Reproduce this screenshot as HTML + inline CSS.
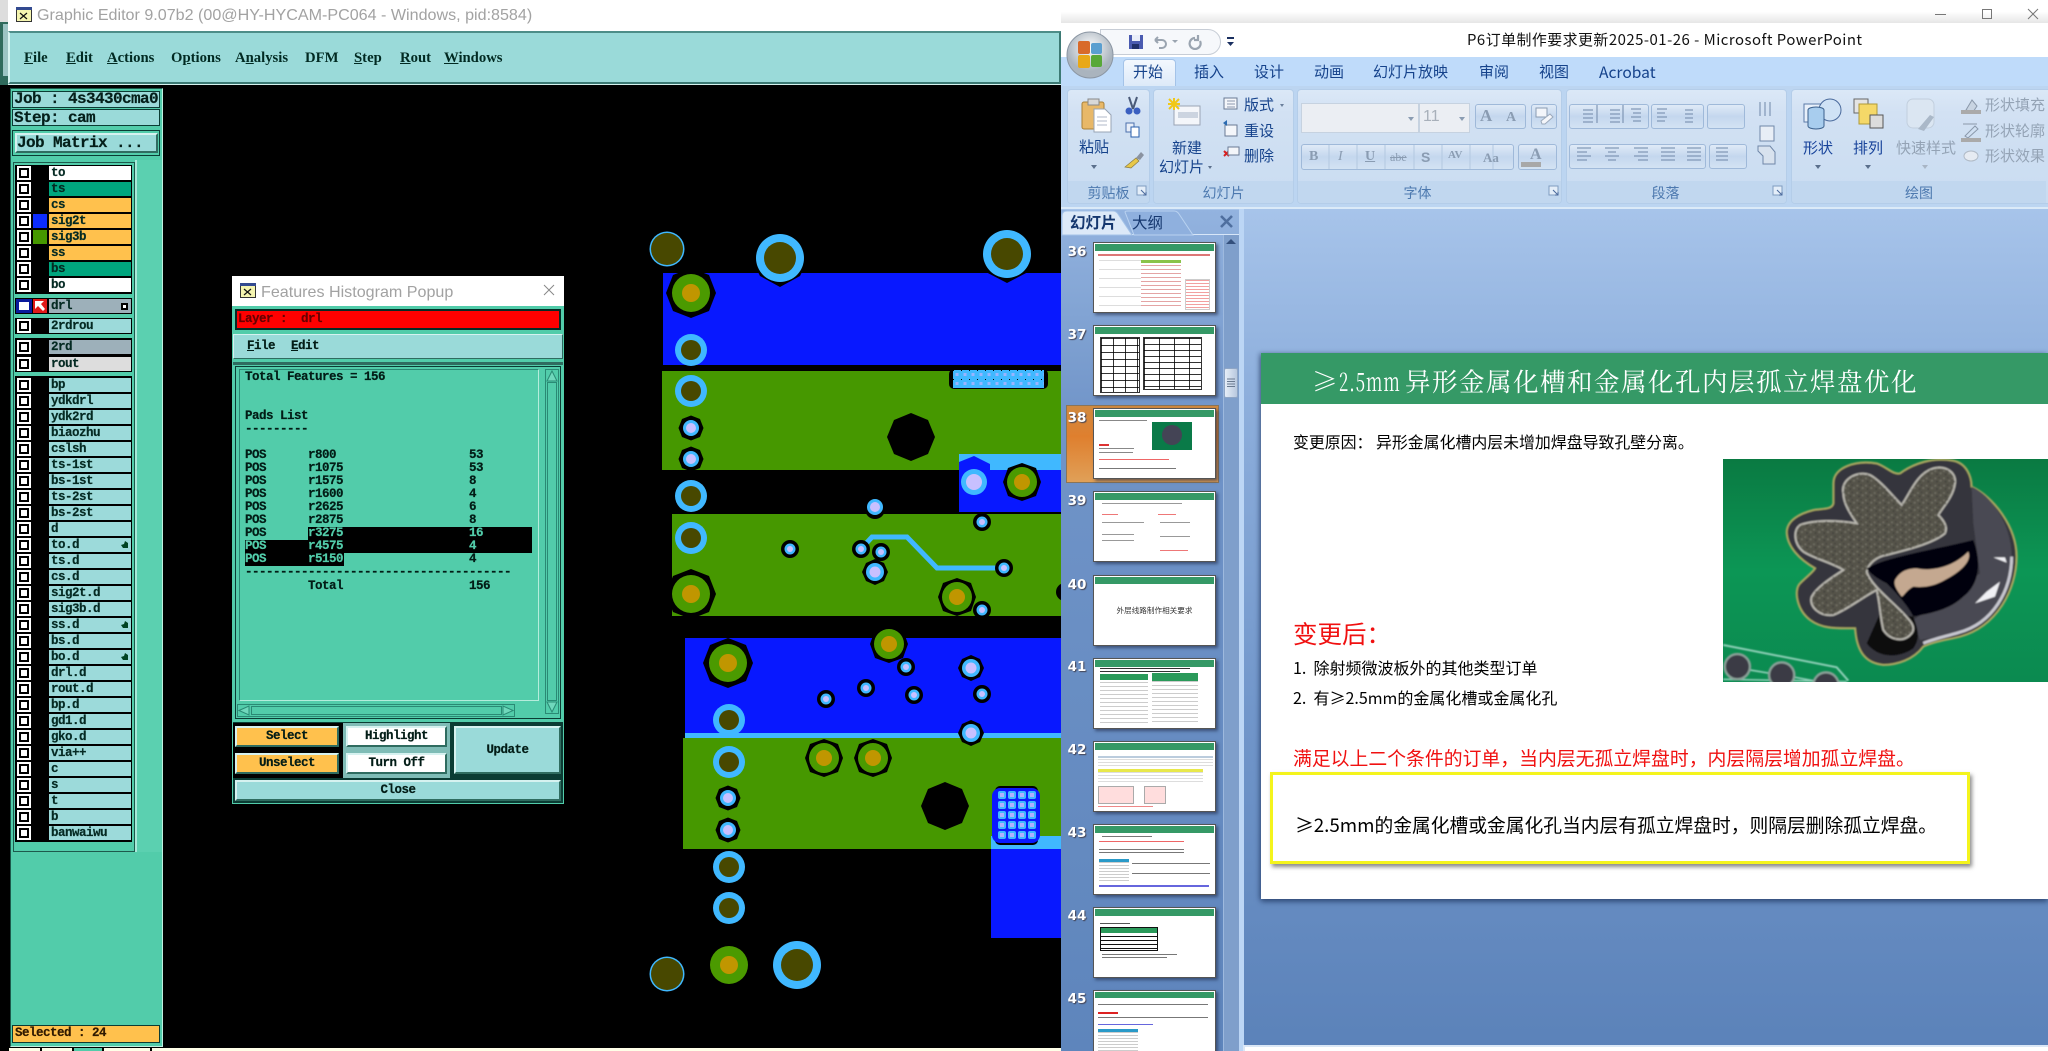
<!DOCTYPE html>
<html><head><meta charset="utf-8"><title>Screenshot</title>
<style>
html,body{margin:0;padding:0;width:2048px;height:1051px;overflow:hidden;background:#000}
div,b,i,span,pre{position:absolute;display:block;margin:0;font-style:normal}
u{position:static}
.t{white-space:nowrap;line-height:20px;height:20px}
.m{font-family:"Liberation Mono",monospace;font-weight:bold;font-size:12.5px;letter-spacing:-.5px;color:#021c16;white-space:pre;-webkit-text-stroke:.2px}
.b15{font-size:16px;letter-spacing:-.6px;color:#041f1a}
.r{left:15px;width:117px;height:16px;background:#000}
.c{left:2px;top:1px;width:14px;height:14px;background:#fff;box-shadow:inset 0 0 0 2px #fff,inset 0 0 0 4px #000}
.l{left:34px;top:1px;width:82px;height:14px;line-height:14px;padding-left:2px;box-sizing:border-box;background:#9cdada;font-family:"Liberation Mono",monospace;font-weight:bold;font-size:12.5px;letter-spacing:-.5px;color:#052a23;white-space:pre;-webkit-text-stroke:.2px}
.mb{font-family:"Liberation Serif",serif;font-weight:bold;font-size:14.7px;color:#012a22;top:48px}
.btn{box-sizing:border-box;border:2px solid;border-color:#d6f2f0 #2f6c60 #2f6c60 #d6f2f0;text-align:center;font-family:"Liberation Mono",monospace;font-weight:bold;font-size:12.5px;letter-spacing:-.5px;color:#021c16;-webkit-text-stroke:.2px}
.p{font-family:"Noto Sans CJK SC","Liberation Sans",sans-serif;color:#15428b;font-size:15px}
.g{top:89px;height:115px;box-sizing:border-box;border:1px solid #b4cde9;border-radius:4px;background:linear-gradient(#dbe8f7 0,#d2e1f3 20%,#c9dcf1 100%);overflow:hidden}
.g b{left:0;right:0;bottom:0;height:22px;box-sizing:border-box;background:#c1d7ef;text-align:center;font:14px/25px "Noto Sans CJK SC",sans-serif;color:#4d79af}
.bg{box-sizing:border-box;border:1px solid #9fb9d9;border-radius:3px;background:linear-gradient(#dfeaf7,#c4d7ee 50%,#d3e2f3)}
.th{left:1093px;width:123px;height:71px;background:#fff;border:1px solid #555;box-sizing:border-box;box-shadow:2px 2px 3px rgba(30,40,70,.6);overflow:hidden}
.th>i{left:1px;top:1px;right:1px;height:7px;background:#359966}
.n{left:1066px;width:22px;text-align:center;font:bold 13.5px/14px "DejaVu Sans",sans-serif;color:#fff;text-shadow:1px 1px 1px #445}
.th s{position:absolute;display:block;text-decoration:none}
.s{font-family:"Noto Sans CJK SC","Liberation Sans",sans-serif;color:#000;white-space:nowrap;line-height:28px;height:28px}
.in{position:static;display:inline;color:#52ccaa}
.ar{border:3px solid transparent;border-top:4px solid #8a9cb2;border-bottom:0}
</style></head><body>

<!-- far-left background window sliver -->
<div style="left:0;top:0;width:10px;height:1051px;background:#2f6a5c"></div>
<div style="left:0;top:0;width:8px;height:22px;background:#ddd"></div>
<div style="left:3px;top:24px;width:5px;height:52px;background:#9cc4c4"></div>
<div style="left:3px;top:845px;width:5px;height:180px;background:#52ccaa"></div>
<div style="left:3px;top:1025px;width:5px;height:18px;background:#ffc14d"></div>

<!-- main window title -->
<div style="left:8px;top:0;width:1053px;height:31px;background:#fff"></div>
<svg style="position:absolute;left:16px;top:7px" width="17" height="16"><rect x=".5" y=".5" width="15" height="14" fill="#f5f5b0" stroke="#333"/><rect x="0" y="0" width="16" height="3" fill="#334a90"/><path d="M4 6l7 6M11 6l-7 6" stroke="#111" stroke-width="1.2"/></svg>
<div class="t" style="left:37px;top:5px;font:16.1px/20px 'Liberation Sans',sans-serif;color:#a2a2a2">Graphic Editor 9.07b2 (00@HY-HYCAM-PC064 - Windows, pid:8584)</div>

<!-- menu bar -->
<div style="left:8px;top:31px;width:1053px;height:53px;box-sizing:border-box;background:#9adad9;border:2px solid;border-color:#4d8d88 #3c7a74 #3c7a74 #d8f4f2"></div>
<div style="left:8px;top:84px;width:1053px;height:2px;background:#d5f2ef"></div>
<div class="t mb" style="left:24px"><u>F</u>ile</div>
<div class="t mb" style="left:66px"><u>E</u>dit</div>
<div class="t mb" style="left:107px"><u>A</u>ctions</div>
<div class="t mb" style="left:171px">O<u>p</u>tions</div>
<div class="t mb" style="left:235px">A<u>n</u>alysis</div>
<div class="t mb" style="left:305px">DFM</div>
<div class="t mb" style="left:354px"><u>S</u>tep</div>
<div class="t mb" style="left:400px"><u>R</u>out</div>
<div class="t mb" style="left:444px"><u>W</u>indows</div>

<!-- PCB canvas -->
<svg style="position:absolute;left:0;top:0" width="1061" height="1051">
<defs>
<g id="r"><circle r="16" fill="#40b8ff"/><circle r="10" fill="#484800"/></g>
<g id="R"><circle r="24" fill="#40b8ff"/><circle r="16" fill="#484800"/></g>
<g id="T"><circle r="17.5" fill="#40b8ff"/><circle r="16" fill="#484800"/></g>
<g id="G"><polygon points="0,-25 18,-18 25,0 18,18 0,25 -18,18 -25,0 -18,-18"/><circle r="19" fill="#4b9a00"/><circle r="9" fill="#c09600"/></g>
<g id="M"><polygon points="0,-19 14,-14 19,0 14,14 0,19 -14,14 -19,0 -14,-14"/><circle r="15" fill="#4b9a00"/><circle r="8" fill="#c09600"/></g>
<g id="L"><polygon points="0,-12.500 9,-9 12.500,0 9,9 0,12.500 -9,9 -12.500,0 -9,-9"/><circle r="8" fill="#40b8ff"/><circle r="5" fill="#c8c0ff"/></g>
<g id="B"><polygon points="0,-13 9,-9 13,0 9,9 0,13 -9,9 -13,0 -9,-9"/><circle r="9" fill="#40b8ff"/><circle r="5.500" fill="#c8c0ff"/></g>
<g id="S"><circle r="9" fill="#000"/><circle r="5.500" fill="#40b8ff"/><circle r="3" fill="#c8c0ff"/></g>
<pattern id="pa" x="953" y="370" width="8" height="9" patternUnits="userSpaceOnUse"><rect width="8" height="9" fill="#40b8ff"/><rect x="2.500" y="3" width="3" height="3" fill="#9ab4ff"/><rect width="1" height="1" fill="#000"/></pattern>
<pattern id="pb" x="997" y="790" width="10" height="10" patternUnits="userSpaceOnUse"><rect width="10" height="10" fill="#0a18ff"/><rect x="1" y="1" width="8" height="8" rx="2" fill="#40b8ff"/><rect x="3" y="3" width="4" height="4" fill="#b0b0ff"/></pattern>
</defs>
<rect x="0" y="85" width="1061" height="963" fill="#000"/>
<rect x="663" y="273" width="398" height="92" fill="#0818ff"/>
<rect x="662" y="371" width="399" height="99" fill="#469800"/>
<rect x="672" y="514" width="389" height="102" fill="#469800"/>
<rect x="959" y="454" width="102" height="16" fill="#40b8ff"/>
<rect x="959" y="470" width="102" height="42" fill="#0818ff"/>
<polygon points="959,470 959,462 974,456 990,464 990,470" fill="#0818ff"/>
<rect x="685" y="638" width="376" height="95" fill="#0818ff"/>
<rect x="685" y="733" width="376" height="5" fill="#40b8ff"/>
<rect x="683" y="738" width="378" height="111" fill="#469800"/>
<rect x="991" y="849" width="70" height="89" fill="#0818ff"/>
<rect x="991" y="836" width="70" height="13" fill="#40b8ff"/>
<rect x="949" y="369" width="99" height="20" rx="5" fill="#000"/>
<rect x="953" y="370" width="91" height="18" fill="url(#pa)"/>
<polygon points="911,413 928,420 935,437 928,454 911,461 894,454 887,437 894,420"/>
<polygon points="945,782 962,789 969,806 962,823 945,830 928,823 921,806 928,789"/>
<rect x="995" y="786" width="43" height="59" rx="5" fill="#000"/>
<rect x="992" y="788" width="48" height="55" rx="8" fill="#0a18ff"/>
<rect x="997" y="790" width="40" height="50" fill="url(#pb)"/>
<polygon points="780,287 800,276 809,258 800,235 760,235 751,258 760,276"/>
<polygon points="1007,283 1030,271 1036,254 1030,235 984,235 978,254 984,271"/>
<polyline points="861,549 872,537 907,537 937,568 1004,568" fill="none" stroke="#40b8ff" stroke-width="5"/>
<use href="#T" x="667" y="249"/><use href="#R" x="780" y="258"/><use href="#R" x="1007" y="254"/>
<use href="#G" x="691" y="293"/><use href="#r" x="691" y="350"/><use href="#r" x="691" y="391"/>
<use href="#L" x="691" y="428"/><use href="#L" x="691" y="459"/>
<use href="#r" x="691" y="496"/><use href="#r" x="691" y="538"/><use href="#G" x="691" y="594"/>
<circle cx="974" cy="482" r="13" fill="#40b8ff"/><circle cx="974" cy="482" r="8" fill="#c8c0ff"/>
<use href="#M" x="1022" y="482"/>
<circle cx="875" cy="509" r="10"/><circle cx="875" cy="507" r="8" fill="#40b8ff"/><circle cx="875" cy="507" r="5" fill="#c8c0ff"/>
<use href="#S" x="982" y="522"/><use href="#S" x="790" y="549"/><use href="#S" x="861" y="549"/><use href="#S" x="881" y="552"/>
<use href="#B" x="875" y="572"/><use href="#S" x="1004" y="568"/>
<use href="#M" x="957" y="597"/><use href="#S" x="982" y="610"/><circle cx="1065" cy="592" r="9"/>
<use href="#G" x="728" y="663"/><use href="#M" x="889" y="644"/>
<use href="#S" x="906" y="667"/><use href="#S" x="866" y="688"/><use href="#S" x="826" y="699"/><use href="#S" x="914" y="695"/>
<use href="#B" x="971" y="668"/><use href="#S" x="982" y="694"/><use href="#B" x="971" y="733"/>
<use href="#r" x="729" y="720"/><use href="#r" x="729" y="762"/>
<use href="#M" x="824" y="758"/><use href="#M" x="873" y="758"/>
<use href="#L" x="728" y="798"/><use href="#L" x="728" y="830"/>
<use href="#r" x="729" y="867"/><use href="#r" x="729" y="908"/><use href="#T" x="667" y="974"/>
<circle cx="729" cy="965" r="19" fill="#4b9a00"/><circle cx="729" cy="965" r="9" fill="#c09600"/>
<use href="#R" x="797" y="965"/>
</svg>
<!-- bottom strip -->
<div style="left:0;top:1047px;width:1061px;height:4px;background:#000"></div>
<div style="left:9px;top:1048px;width:31px;height:3px;background:#ffffe8"></div>
<div style="left:42px;top:1048px;width:30px;height:3px;background:#ffffe8"></div>
<div style="left:74px;top:1048px;width:28px;height:3px;background:#52ccaa"></div>
<div style="left:104px;top:1048px;width:46px;height:3px;background:#ffffe8"></div>
<div style="left:152px;top:1048px;width:909px;height:3px;background:#ffffe8"></div>

<!-- left panel -->
<div style="left:10px;top:88px;width:153px;height:959px;box-sizing:border-box;background:#52ccaa;border:1px solid;border-color:#1d5a4c #bff0e0 #bff0e0 #1d5a4c"></div>
<div style="left:12px;top:91px;width:148px;height:17px;box-sizing:border-box;background:#9adad9;border:1.5px solid #0b3c34"></div>
<div class="t m b15" style="left:14px;top:89px">Job : 4s3430cma0</div>
<div style="left:12px;top:109px;width:148px;height:17px;box-sizing:border-box;background:#9adad9;border:1.5px solid #0b3c34"></div>
<div class="t m b15" style="left:14px;top:108px">Step: cam</div>
<div style="left:12px;top:130px;width:148px;height:26px;box-sizing:border-box;background:#52ccaa;border:1.5px solid #0b3c34"></div>
<div class="btn" style="left:15px;top:133px;width:143px;height:20px;background:#9adad9"></div>
<div class="t m b15" style="left:17px;top:133px">Job Matrix ...</div>
<div style="left:13px;top:162px;width:122px;height:690px;box-sizing:border-box;background:#52ccaa;border:1px solid #1d5a4c"></div>
<div style="left:135px;top:160px;width:27px;height:692px;background:#5bd0b0"></div>
<div style="left:135px;top:160px;width:2px;height:692px;background:#a8e8d8"></div>

<div style="left:15px;top:165px;width:117px;height:129px;background:#000"></div>
<div class="r" style="top:165px"><i class="c"></i><b class="l" style="background:#fff">to</b></div>
<div class="r" style="top:181px"><i class="c"></i><b class="l" style="background:#00a57e">ts</b></div>
<div class="r" style="top:197px"><i class="c"></i><b class="l" style="background:#ffc14d">cs</b></div>
<div class="r" style="top:213px"><i class="c"></i><i style="left:18px;top:1px;width:14px;height:14px;background:#0c2cff"></i><b class="l" style="background:#ffc14d">sig2t</b></div>
<div class="r" style="top:229px"><i class="c"></i><i style="left:18px;top:1px;width:14px;height:14px;background:#469800"></i><b class="l" style="background:#ffc14d">sig3b</b></div>
<div class="r" style="top:245px"><i class="c"></i><b class="l" style="background:#ffc14d">ss</b></div>
<div class="r" style="top:261px"><i class="c"></i><b class="l" style="background:#00a57e">bs</b></div>
<div class="r" style="top:277px"><i class="c"></i><b class="l" style="background:#fff">bo</b></div>

<div class="r" style="top:298px"><i class="c" style="background:#fff;box-shadow:inset 0 0 0 3px #0a1a9c;left:1px;width:16px"></i><i style="left:18px;top:1px;width:14px;height:14px;background:#e01818"></i><svg style="position:absolute;left:19px;top:2px" width="12" height="12"><path d="M1 1h9L7 4l4 5-2 2-5-5-3 3z" fill="#fff"/></svg><b class="l" style="background:#9db0ba">drl<span style="right:3px;top:4px;width:5px;height:5px;background:#fff;border:1px solid #000;box-shadow:inset 0 0 0 1px #000"></span></b></div>
<div class="r" style="top:318px"><i class="c"></i><b class="l">2rdrou</b></div>
<div style="left:15px;top:338px;width:117px;height:34px;background:#000"></div>
<div class="r" style="top:339px"><i class="c"></i><b class="l" style="background:#9db0ba">2rd</b></div>
<div class="r" style="top:356px"><i class="c"></i><b class="l" style="background:#ddd">rout</b></div>

<div style="left:15px;top:376px;width:117px;height:466px;background:#000"></div>
<div class="r" style="top:377px"><i class="c"></i><b class="l">bp</b></div>
<div class="r" style="top:393px"><i class="c"></i><b class="l">ydkdrl</b></div>
<div class="r" style="top:409px"><i class="c"></i><b class="l">ydk2rd</b></div>
<div class="r" style="top:425px"><i class="c"></i><b class="l">biaozhu</b></div>
<div class="r" style="top:441px"><i class="c"></i><b class="l">cslsh</b></div>
<div class="r" style="top:457px"><i class="c"></i><b class="l">ts-1st</b></div>
<div class="r" style="top:473px"><i class="c"></i><b class="l">bs-1st</b></div>
<div class="r" style="top:489px"><i class="c"></i><b class="l">ts-2st</b></div>
<div class="r" style="top:505px"><i class="c"></i><b class="l">bs-2st</b></div>
<div class="r" style="top:521px"><i class="c"></i><b class="l">d</b></div>
<div class="r" style="top:537px"><i class="c"></i><b class="l">to.d<svg style="position:absolute;right:2px;top:3px" width="8" height="8"><path d="M0 4l3-1 1-3 3 2v5H2z" fill="#042"/></svg></b></div>
<div class="r" style="top:553px"><i class="c"></i><b class="l">ts.d</b></div>
<div class="r" style="top:569px"><i class="c"></i><b class="l">cs.d</b></div>
<div class="r" style="top:585px"><i class="c"></i><b class="l">sig2t.d</b></div>
<div class="r" style="top:601px"><i class="c"></i><b class="l">sig3b.d</b></div>
<div class="r" style="top:617px"><i class="c"></i><b class="l">ss.d<svg style="position:absolute;right:2px;top:3px" width="8" height="8"><path d="M0 4l3-1 1-3 3 2v5H2z" fill="#042"/></svg></b></div>
<div class="r" style="top:633px"><i class="c"></i><b class="l">bs.d</b></div>
<div class="r" style="top:649px"><i class="c"></i><b class="l">bo.d<svg style="position:absolute;right:2px;top:3px" width="8" height="8"><path d="M0 4l3-1 1-3 3 2v5H2z" fill="#042"/></svg></b></div>
<div class="r" style="top:665px"><i class="c"></i><b class="l">drl.d</b></div>
<div class="r" style="top:681px"><i class="c"></i><b class="l">rout.d</b></div>
<div class="r" style="top:697px"><i class="c"></i><b class="l">bp.d</b></div>
<div class="r" style="top:713px"><i class="c"></i><b class="l">gd1.d</b></div>
<div class="r" style="top:729px"><i class="c"></i><b class="l">gko.d</b></div>
<div class="r" style="top:745px"><i class="c"></i><b class="l">via++</b></div>
<div class="r" style="top:761px"><i class="c"></i><b class="l">c</b></div>
<div class="r" style="top:777px"><i class="c"></i><b class="l">s</b></div>
<div class="r" style="top:793px"><i class="c"></i><b class="l">t</b></div>
<div class="r" style="top:809px"><i class="c"></i><b class="l">b</b></div>
<div class="r" style="top:825px"><i class="c"></i><b class="l">banwaiwu</b></div>

<div style="left:12px;top:1025px;width:148px;height:18px;box-sizing:border-box;background:#ffc14d;border:1.5px solid #0b3c34"></div>
<div class="t m" style="left:15px;top:1023px;color:#301a00">Selected : 24</div>

<!-- Popup -->
<div style="left:232px;top:276px;width:332px;height:528px;background:#52ccaa"></div>
<div style="left:232px;top:276px;width:332px;height:30px;background:#fff"></div>
<svg style="position:absolute;left:240px;top:283px" width="17" height="16"><rect x=".5" y=".5" width="15" height="14" fill="#f5f5b0" stroke="#333"/><rect width="16" height="3" fill="#334a90"/><path d="M4 6l7 6M11 6l-7 6" stroke="#111" stroke-width="1.2"/></svg>
<div class="t" style="left:261px;top:281px;font:16.100px/22px 'Liberation Sans',sans-serif;color:#a2a2a2">Features Histogram Popup</div>
<svg style="position:absolute;left:543px;top:284px" width="12" height="12"><path d="M1 1l10 10M11 1L1 11" stroke="#888" stroke-width="1"/></svg>
<div style="left:235px;top:309px;width:326px;height:21px;box-sizing:border-box;background:#ff0000;border:2px solid #052b25"></div>
<div class="t m" style="left:238px;top:309px;color:#680000">Layer :  drl</div>
<div style="left:233px;top:334px;width:330px;height:25px;box-sizing:border-box;background:#9adad9;border:1.5px solid;border-color:#d6f2f0 #2f6c60 #2f6c60 #d6f2f0"></div>
<div class="t m" style="left:247px;top:336px"><u>F</u>ile</div>
<div class="t m" style="left:291px;top:336px"><u>E</u>dit</div>
<div style="left:233px;top:362px;width:330px;height:3px;background:#2f6c60"></div>
<div style="left:235px;top:366px;width:326px;height:353px;box-sizing:border-box;border:1.5px solid #0b3c34"></div>
<div style="left:239px;top:369px;width:300px;height:332px;box-sizing:border-box;border:1.5px solid;border-color:#2a8a74 #b5ecdc #b5ecdc #2a8a74"></div>
<div style="left:308px;top:526.500px;width:224px;height:26.500px;background:#000"></div>
<div style="left:245px;top:539.500px;width:63px;height:13.500px;background:#000"></div>
<div style="left:245px;top:553px;width:99px;height:12.500px;background:#000"></div>
<pre class="m" style="left:245px;top:370.500px;line-height:13.070px">Total Features = 156


Pads List
---------

POS      r800                   53
POS      r1075                  53
POS      r1575                  8
POS      r1600                  4
POS      r2625                  6
POS      r2875                  8
POS      <span class="in">r3275                  16</span>
<span class="in">POS      r4575                  4</span>
<span class="in">POS      r5150</span>                  4
--------------------------------------
         Total                  156</pre>
<!-- v scroll -->
<div style="left:545px;top:369px;width:14px;height:345px;box-sizing:border-box;border:1.5px solid #2a8a74;background:#52ccaa"></div>
<div style="left:547px;top:382px;width:10px;height:319px;box-sizing:border-box;border:1.5px solid #2a8a74;background:#52ccaa"></div>
<svg style="position:absolute;left:546px;top:370px" width="12" height="12"><path d="M6 1L1 11h10z" fill="#70d8bc" stroke="#2a8a74"/></svg>
<svg style="position:absolute;left:546px;top:701px" width="12" height="12"><path d="M6 11L1 1h10z" fill="#70d8bc" stroke="#2a8a74"/></svg>
<!-- h scroll -->
<div style="left:237px;top:704px;width:278px;height:13px;box-sizing:border-box;border:1.5px solid #2a8a74;background:#52ccaa"></div>
<div style="left:251px;top:706px;width:251px;height:9px;box-sizing:border-box;border:1.5px solid #2a8a74"></div>
<svg style="position:absolute;left:238px;top:705px" width="12" height="11"><path d="M1 5.500L11 1v9z" fill="#70d8bc" stroke="#2a8a74"/></svg>
<svg style="position:absolute;left:502px;top:705px" width="12" height="11"><path d="M11 5.500L1 1v9z" fill="#70d8bc" stroke="#2a8a74"/></svg>
<!-- buttons -->
<div style="left:233px;top:722px;width:330px;height:2px;background:#0b3c34"></div>
<div style="left:233px;top:723px;width:110px;height:57px;background:#000"></div>
<div class="btn" style="left:235px;top:726px;width:104px;height:21px;background:#ffc14d;line-height:17px">Select</div>
<div class="btn" style="left:235px;top:753px;width:104px;height:21px;background:#ffc14d;line-height:17px">Unselect</div>
<div style="left:343px;top:723px;width:107px;height:57px;background:#7fbcb6"></div>
<div class="btn" style="left:346px;top:726px;width:101px;height:21px;background:#fff;line-height:17px">Highlight</div>
<div class="btn" style="left:346px;top:753px;width:101px;height:21px;background:#fff;line-height:17px">Turn Off</div>
<div style="left:450px;top:723px;width:113px;height:57px;background:#0b3c34"></div>
<div class="btn" style="left:454px;top:726px;width:107px;height:48px;background:#9adad9;line-height:44px">Update</div>
<div style="left:233px;top:778px;width:330px;height:25px;background:#0b3c34"></div>
<div class="btn" style="left:235px;top:780px;width:326px;height:21px;background:#9adad9;line-height:17px">Close</div>

<!-- PowerPoint window -->
<div style="left:1061px;top:0;width:987px;height:23px;background:linear-gradient(#fff,#fff 50%,#e6e6e6)"></div>
<svg style="position:absolute;left:1930px;top:6px" width="112" height="18"><path d="M5 8.500h11" stroke="#777"/><rect x="52.500" y="3.500" width="9" height="9" fill="none" stroke="#777"/><path d="M98 3l10 10M108 3L98 13" stroke="#777"/></svg>
<div style="left:1061px;top:23px;width:987px;height:34px;background:#fff"></div>
<div class="t" style="left:1467px;top:30px;font:14.900px/20px 'Noto Sans CJK SC','Liberation Sans',sans-serif;letter-spacing:.5px;color:#111">P6订单制作要求更新2025-01-26 - Microsoft PowerPoint</div>
<!-- QAT -->
<div style="left:1100px;top:29px;width:121px;height:26px;box-sizing:border-box;background:#f6f8fb;border:1px solid #c7cdd6;border-radius:0 13px 13px 0"></div>
<svg style="position:absolute;left:1128px;top:34px" width="110" height="16"><rect x="1" y="1" width="14" height="14" fill="#4a5bb0"/><rect x="4" y="1" width="8" height="6" fill="#e9eef8"/><rect x="4" y="10" width="7" height="5" fill="#20306a"/><path d="M27 6h7a4 4 0 0 1 0 8h-3M27 6l3-3M27 6l3 3" fill="none" stroke="#9aa4b0" stroke-width="2"/><path d="M44 6h6l-3 3z" fill="#9aa4b0"/><path d="M67 4a5.500 5.500 0 1 0 5 3M70 1v5h-4" fill="none" stroke="#9aa4b0" stroke-width="2.200"/><path d="M99 3h7v2h-7zM99 8h7l-3.500 4z" fill="#1a2f60"/></svg>
<!-- tabs bar -->
<div style="left:1061px;top:57px;width:987px;height:30px;background:#bfdbfa"></div>
<div style="left:1123px;top:59px;width:53px;height:28px;box-sizing:border-box;background:linear-gradient(#f3f8fe,#dce9f8);border:1px solid #a4c3e8;border-bottom:none;border-radius:4px 4px 0 0"></div>
<div class="t p" style="left:1133px;top:62px">开始</div>
<div class="t p" style="left:1194px;top:62px">插入</div>
<div class="t p" style="left:1254px;top:62px">设计</div>
<div class="t p" style="left:1314px;top:62px">动画</div>
<div class="t p" style="left:1373px;top:62px">幻灯片放映</div>
<div class="t p" style="left:1479px;top:62px">审阅</div>
<div class="t p" style="left:1539px;top:62px">视图</div>
<div class="t p" style="left:1599px;top:62px;font-size:15.600px">Acrobat</div>
<!-- ribbon -->
<div style="left:1061px;top:86px;width:987px;height:121px;background:#bcd5f1"></div>
<div style="left:1061px;top:207px;width:987px;height:2px;background:#dbeaf8"></div>
<div class="g" style="left:1067px;width:83px"><b>剪贴板</b></div>
<div class="g" style="left:1153px;width:141px"><b>幻灯片</b></div>
<div class="g" style="left:1297px;width:265px"><b style="padding-right:24px">字体</b></div>
<div class="g" style="left:1566px;width:221px"><b style="padding-right:22px">段落</b></div>
<div class="g" style="left:1791px;width:270px"><b style="right:14px">绘图</b></div>
<svg style="position:absolute;left:1134px;top:183px" width="16" height="16"><rect x="3" y="3" width="9" height="9" fill="#e4eef9" stroke="#7f9cc0"/><path d="M7 7l5 5M12 9v3H9" stroke="#4a6a9c" fill="none"/></svg>
<svg style="position:absolute;left:1546px;top:183px" width="16" height="16"><rect x="3" y="3" width="9" height="9" fill="#e4eef9" stroke="#7f9cc0"/><path d="M7 7l5 5M12 9v3H9" stroke="#4a6a9c" fill="none"/></svg>
<svg style="position:absolute;left:1770px;top:183px" width="16" height="16"><rect x="3" y="3" width="9" height="9" fill="#e4eef9" stroke="#7f9cc0"/><path d="M7 7l5 5M12 9v3H9" stroke="#4a6a9c" fill="none"/></svg>
<!-- office button -->
<svg style="position:absolute;left:1066px;top:31px" width="48" height="48"><defs><radialGradient id="ob" cx=".5" cy=".35"><stop offset="0" stop-color="#fff"/><stop offset="1" stop-color="#aab4be"/></radialGradient></defs><circle cx="24" cy="24" r="23" fill="url(#ob)" stroke="#8b96a3"/><rect x="12" y="10" width="12" height="13" rx="2" fill="#d86a2a"/><rect x="25" y="12" width="11" height="11" rx="2" fill="#5a9fd0"/><rect x="12" y="24" width="12" height="13" rx="2" fill="#e8a818"/><rect x="25" y="24" width="11" height="12" rx="2" fill="#58a838"/></svg>
<!-- clipboard icons -->
<svg style="position:absolute;left:1078px;top:96px" width="72" height="80"><rect x="4" y="6" width="22" height="27" rx="2" fill="#e8b868" stroke="#a88038"/><rect x="10" y="3" width="11" height="6" fill="#d8d8d8" stroke="#888"/><path d="M16 13h11l6 6v17H16z" fill="#fff" stroke="#98a4b4"/><path d="M19 21h10M19 25h10M19 29h10" stroke="#b0bac8"/><path d="M51 1l4 12M59 1l-4 12" stroke="#4a5a78" stroke-width="2"/><circle cx="51" cy="15" r="3.500" fill="#3a5fc0"/><circle cx="59" cy="15" r="3.500" fill="#3a5fc0"/><rect x="48" y="27" width="8" height="9" fill="#e8eef8" stroke="#4a6fac"/><rect x="53" y="31" width="8" height="10" fill="#fff" stroke="#2a5fac"/><path d="M58 62l3 3-8 7-6-1z" fill="#e8c848" stroke="#8a7a40" stroke-width=".7"/><path d="M58 62l5-6 3 3-4 5z" fill="#8a92a0"/></svg>
<div class="t p" style="left:1079px;top:137px;color:#15428b">粘贴</div>
<div style="left:1091px;top:165px;border:3px solid transparent;border-top:4px solid #5a6f8c;border-bottom:0"></div>
<!-- slide icons -->
<svg style="position:absolute;left:1168px;top:98px" width="72" height="70"><rect x="6" y="8" width="26" height="19" fill="#f4f6fa" stroke="#9aa4b4"/><rect x="10" y="14" width="20" height="6" fill="#ccd4e0"/><path d="M6 0v12M0 6h12M1 1l10 10M11 1L1 11" stroke="#f0c818" stroke-width="2"/></svg>
<svg style="position:absolute;left:1223px;top:97px" width="17" height="70"><rect x="1" y="1" width="13" height="11" fill="#f4f6fa" stroke="#6a7a94"/><path d="M4 4h8M4 7h8M4 10h8" stroke="#6a7a94" stroke-width=".8"/><rect x="2" y="28" width="12" height="11" fill="#f4f6fa" stroke="#6a7a94"/><path d="M0 26l4-3v6z" fill="#2a6ab0"/><path d="M1 54l5 5M6 54l-5 5" stroke="#d82020" stroke-width="2"/><rect x="5" y="50" width="11" height="8" fill="#f4f6fa" stroke="#6a7a94"/></svg>
<div class="t p" style="left:1244px;top:95px">版式</div>
<div style="left:1280px;top:104px;border:2.500px solid transparent;border-top:3px solid #6a7f9c;border-bottom:0"></div>
<div class="t p" style="left:1244px;top:121px">重设</div>
<div class="t p" style="left:1244px;top:146px">删除</div>
<div class="t p" style="left:1172px;top:138px">新建</div>
<div class="t p" style="left:1159px;top:157px">幻灯片</div>
<div style="left:1208px;top:166px;border:2.500px solid transparent;border-top:3px solid #5a6f8c;border-bottom:0"></div>
<!-- font group -->
<div style="left:1301px;top:103px;width:118px;height:30px;box-sizing:border-box;background:#ebeef3;border:1px solid #c6d2e0"></div>
<div style="left:1419px;top:103px;width:51px;height:30px;box-sizing:border-box;background:#ebeef3;border:1px solid #c6d2e0"></div>
<div class="ar" style="left:1408px;top:117px"></div>
<div class="ar" style="left:1459px;top:117px"></div>
<div class="t" style="left:1423px;top:107px;font:16px/20px 'Liberation Sans',sans-serif;color:#a8b0ba">11</div>
<div class="bg" style="left:1475px;top:104px;width:51px;height:25px"></div>
<div class="bg" style="left:1531px;top:104px;width:26px;height:25px"></div>
<div class="t" style="left:1480px;top:106px;font:bold 17px/20px 'Liberation Serif',serif;color:#8a9cb2">A</div>
<div class="t" style="left:1506px;top:108px;font:bold 14px/20px 'Liberation Serif',serif;color:#8a9cb2">A</div>
<svg style="position:absolute;left:1534px;top:107px" width="20" height="19"><rect x="2" y="1" width="11" height="9" fill="#f2f5fa" stroke="#8a9cb2"/><path d="M7 14l9-7 3 3-8 7H8z" fill="#f4f6fa" stroke="#9aa8ba"/></svg>
<div class="bg" style="left:1301px;top:144px;width:213px;height:26px"></div>
<div class="bg" style="left:1518px;top:144px;width:39px;height:26px"></div>
<svg style="position:absolute;left:1301px;top:144px" width="213" height="26" stroke="#b3c8e0"><path d="M28 1v24M56 1v24M84 1v24M113 1v24M141 1v24M192 1v24M169 1v24"/></svg>
<div class="t" style="left:1309px;top:147px;font:bold 14px/20px 'Liberation Serif',serif;color:#8a9cb2">B</div>
<div class="t" style="left:1338px;top:147px;font:italic 14px/20px 'Liberation Serif',serif;color:#8a9cb2">I</div>
<div class="t" style="left:1365px;top:147px;font:bold 14px/20px 'Liberation Serif',serif;color:#8a9cb2;text-decoration:underline">U</div>
<div class="t" style="left:1390px;top:147px;font:12px/20px 'Liberation Serif',serif;color:#8a9cb2;text-decoration:line-through">abe</div>
<div class="t" style="left:1421px;top:147px;font:bold 14px/20px 'Liberation Sans',sans-serif;color:#8a9cb2">S</div>
<div class="t" style="left:1448px;top:145px;font:bold 11px/20px 'Liberation Serif',serif;color:#8a9cb2">AV</div>
<div class="t" style="left:1483px;top:148px;font:bold 13px/20px 'Liberation Serif',serif;color:#8a9cb2">Aa</div>
<div class="t" style="left:1530px;top:145px;font:bold 16px/20px 'Liberation Serif',serif;color:#8a9cb2">A</div>
<div style="left:1521px;top:162px;width:20px;height:5px;background:#a8a8a8"></div>
<!-- para group -->
<div class="bg" style="left:1569px;top:104px;width:80px;height:25px"></div>
<div class="bg" style="left:1651px;top:104px;width:53px;height:25px"></div>
<div class="bg" style="left:1707px;top:104px;width:38px;height:25px"></div>
<div class="bg" style="left:1569px;top:144px;width:137px;height:25px"></div>
<div class="bg" style="left:1709px;top:144px;width:38px;height:25px"></div>
<svg style="position:absolute;left:1569px;top:96px" width="210" height="80" stroke="#6f87a8" fill="none"><path d="M14 14h10M14 18h10M14 22h10M14 26h10M41 14h10M41 18h10M41 22h10M41 26h10M62 13h10M64 17h8M62 21h10M64 25h8M88 13h10M88 17h8M88 21h10M88 25h8M116 14h8M116 18h8M116 22h8M116 26h8M8 52h14M8 56h10M8 60h14M8 64h10M36 52h14M39 56h8M36 60h14M39 64h8M65 52h14M69 56h10M65 60h14M69 64h10M92 52h14M92 56h14M92 60h14M92 64h14M118 52h14M118 56h14M118 60h14M118 64h14M147 52h12M147 56h12M147 60h12M147 64h12M191 6v14M196 6v14M201 6v14M28 9v18M54 9v18M109 9v0"/><path d="M191 30h14v15h-14z" fill="#e8eef6"/><path d="M189 50h12l5 6v12h-12v-8l-5-5z" fill="#d8e2ee"/></svg>
<!-- draw group -->
<svg style="position:absolute;left:1800px;top:96px" width="160" height="40"><rect x="4" y="8" width="18" height="18" fill="#e8f0fa" stroke="#5a7aa8"/><circle cx="30" cy="14" r="11" fill="#cfe2f5" stroke="#4a6a9c"/><path d="M8 14a8 3 0 0 1 16 0v16a8 3 0 0 1-16 0z" fill="#a8cdee" stroke="#3a5f8c"/><rect x="54" y="3" width="14" height="14" fill="#e4e4e4" stroke="#666"/><rect x="59" y="8" width="18" height="20" fill="#f5d868" stroke="#b09a38"/><rect x="70" y="19" width="13" height="13" fill="#dcdcdc" stroke="#555"/><rect x="107" y="3" width="27" height="29" rx="6" fill="#dbe6f2" stroke="#c2cfde"/><path d="M118 33l12-14 4 2-10 14z" fill="#aab8c8"/></svg>
<svg style="position:absolute;left:1961px;top:96px" width="22" height="72"><path d="M5 14l6-10 5 6-4 6z" fill="#c8d4e2" stroke="#8a98aa"/><rect y="14" width="20" height="4" fill="#aaa"/><path d="M4 40l10-10 3 3-10 9zM2 28h14" stroke="#8a98aa" fill="none"/><rect y="42" width="20" height="4" fill="#aaa"/><ellipse cx="10" cy="60" rx="7" ry="5" fill="#e6ebf2" stroke="#b0bac6"/></svg>
<div class="t p" style="left:1985px;top:95px;color:#94a3b5">形状填充</div>
<div class="t p" style="left:1985px;top:121px;color:#94a3b5">形状轮廓</div>
<div class="t p" style="left:1985px;top:146px;color:#94a3b5">形状效果</div>
<div class="t p" style="left:1803px;top:138px;color:#17429a">形状</div>
<div class="t p" style="left:1853px;top:138px;color:#17429a">排列</div>
<div class="t p" style="left:1896px;top:138px;color:#94a3b5">快速样式</div>
<div style="left:1815px;top:165px;border:3px solid transparent;border-top:4px solid #5a6f8c;border-bottom:0"></div>
<div style="left:1865px;top:165px;border:3px solid transparent;border-top:4px solid #5a6f8c;border-bottom:0"></div>
<div style="left:1922px;top:165px;border:3px solid transparent;border-top:4px solid #a8b5c5;border-bottom:0"></div>

<!-- edit area -->
<div style="left:1061px;top:209px;width:987px;height:842px;background:linear-gradient(#a7c4ea,#8fb0dd 20%,#7196ca 60%,#5b82b9)"></div>
<!-- slide panel -->
<div style="left:1061px;top:210px;width:178px;height:841px;background:linear-gradient(#93b3df,#7094c8 25%,#5e85bc)"></div>
<div style="left:1239px;top:209px;width:5px;height:842px;background:#bcd6f5"></div>
<div style="left:1223px;top:235px;width:16px;height:816px;background:#7f9fcb;border-left:1px solid #9db9de;box-sizing:border-box"></div>
<svg style="position:absolute;left:1225px;top:238px" width="12" height="8"><path d="M6 1l5 5H1z" fill="#34507c"/></svg>
<div style="left:1224px;top:368px;width:14px;height:30px;box-sizing:border-box;background:linear-gradient(90deg,#e6eef8,#b8c8de);border:1px solid #8fa6c6;border-radius:2px"></div>
<svg style="position:absolute;left:1227px;top:378px" width="8" height="10"><path d="M0 1h8M0 3.500h8M0 6h8M0 8.500h8" stroke="#6a7a90"/></svg>
<div style="left:1063px;top:234px;width:176px;height:1px;background:#d7e6f8"></div>
<svg style="position:absolute;left:1061px;top:210px" width="178" height="26"><path d="M1 25V6q0-5 5-5h46q3 0 5 3l14 21z" fill="#dce9f8" stroke="#a4c3e8"/><path d="M64 2q0-1 3-1h46q3 0 5 3l14 21H73z" fill="#8fb0de" stroke="#b9d2f0"/><path d="M160 6l11 11M171 6l-11 11" stroke="#4f6f9f" stroke-width="2.600"/></svg>
<div class="t" style="left:1070px;top:212px;font:bold 15.500px/20px 'Noto Sans CJK SC',sans-serif;color:#15376f">幻灯片</div>
<div class="t" style="left:1132px;top:212px;font:15.500px/20px 'Noto Sans CJK SC',sans-serif;color:#15376f">大纲</div>

<!-- selection -->
<div style="left:1066px;top:405px;width:153px;height:78px;box-sizing:border-box;background:linear-gradient(#d08a40,#df7f2e 40%,#e0a058);border:1px solid #8a7458"></div>
<!-- numbers -->
<div class="n" style="top:245px">36</div>
<div class="n" style="top:328px">37</div>
<div class="n" style="top:411px">38</div>
<div class="n" style="top:494px">39</div>
<div class="n" style="top:578px">40</div>
<div class="n" style="top:660px">41</div>
<div class="n" style="top:743px">42</div>
<div class="n" style="top:826px">43</div>
<div class="n" style="top:909px">44</div>
<div class="n" style="top:992px">45</div>
<!-- thumbs -->
<div class="th" style="top:242px"><i></i><s style="left:4px;top:11px;width:112px;height:2px;background:#d77"></s><s style="left:5px;top:17px;width:47px;height:48px;background:repeating-linear-gradient(#ddd 0 1px,#fff 1px 9px)"></s><s style="left:47px;top:17px;width:40px;height:3px;background:#8bc34a"></s><s style="left:47px;top:22px;width:40px;height:44px;background:repeating-linear-gradient(#e4a4a4 0 1px,#fff 1px 4px)"></s><s style="left:91px;top:36px;width:23px;height:29px;background:repeating-linear-gradient(#f2a0a0 0 1px,#fff 1px 3px);border:1px solid #ccc"></s></div>
<div class="th" style="top:325px"><i></i><s style="left:6px;top:11px;width:38px;height:54px;background:repeating-linear-gradient(90deg,#333 0 1px,#fff 1px 12px),repeating-linear-gradient(#333 0 1px,#fff 1px 7px);background-blend-mode:multiply;border:1px solid #333"></s><s style="left:49px;top:11px;width:57px;height:51px;background:repeating-linear-gradient(90deg,#333 0 1px,#fff 1px 15px),repeating-linear-gradient(#333 0 1px,#fff 1px 6px);background-blend-mode:multiply;border:1px solid #333"></s></div>
<div class="th" style="top:408px"><i></i><s style="left:5px;top:11px;width:48px;height:1px;background:#888"></s><s style="left:58px;top:13px;width:40px;height:28px;background:#0a7a48"></s><s style="left:68px;top:16px;width:20px;height:20px;background:#445;border-radius:50%"></s><s style="left:5px;top:35px;width:10px;height:2px;background:#d33"></s><s style="left:5px;top:39px;width:35px;height:1px;background:#888"></s><s style="left:5px;top:43px;width:34px;height:1px;background:#888"></s><s style="left:5px;top:50px;width:70px;height:1px;background:#e66"></s><s style="left:5px;top:59px;width:77px;height:1px;background:#777"></s></div>
<div class="th" style="top:491px"><i></i><s style="left:8px;top:11px;width:80px;height:1px;background:#999"></s><s style="left:8px;top:22px;width:16px;height:1px;background:#e77"></s><s style="left:8px;top:30px;width:42px;height:1px;background:#999"></s><s style="left:8px;top:42px;width:32px;height:1px;background:#999"></s><s style="left:8px;top:48px;width:32px;height:1px;background:#999"></s><s style="left:64px;top:22px;width:18px;height:1px;background:#e77"></s><s style="left:66px;top:30px;width:30px;height:1px;background:#999"></s><s style="left:66px;top:44px;width:30px;height:1px;background:#999"></s><s style="left:66px;top:58px;width:28px;height:1px;background:#e77"></s></div>
<div class="th" style="top:575px"><i></i><span style="left:0;right:0;top:30px;text-align:center;font:7.600px/10px 'Noto Sans CJK SC',sans-serif;color:#333">外层线路制作相关要求</span></div>
<div class="th" style="top:658px"><i></i><s style="left:6px;top:9px;width:90px;height:1px;background:#333"></s><s style="left:6px;top:12px;width:80px;height:1px;background:#333"></s><s style="left:6px;top:15px;width:48px;height:50px;background:linear-gradient(#2a9a5a 0 6px,transparent 6px),repeating-linear-gradient(#ccc 0 1px,#fff 1px 4px)"></s><s style="left:58px;top:14px;width:46px;height:51px;background:linear-gradient(#2a9a5a 0 8px,transparent 8px),repeating-linear-gradient(#ccc 0 1px,#fff 1px 4px)"></s></div>
<div class="th" style="top:741px"><i></i><s style="left:4px;top:14px;width:115px;height:2px;background:#bcd"></s><s style="left:4px;top:17px;width:115px;height:9px;background:repeating-linear-gradient(#ddd 0 1px,#fff 1px 3px)"></s><s style="left:4px;top:27px;width:105px;height:3px;background:#e8e84a"></s><s style="left:4px;top:30px;width:105px;height:12px;background:repeating-linear-gradient(#ddd 0 1px,#fff 1px 3px)"></s><s style="left:4px;top:44px;width:34px;height:16px;background:#fdd;border:1px solid #aaa"></s><s style="left:50px;top:44px;width:20px;height:16px;background:#fdd;border:1px solid #aaa"></s><s style="left:4px;top:64px;width:55px;height:1px;background:#e88"></s></div>
<div class="th" style="top:824px"><i></i><s style="left:8px;top:11px;width:50px;height:1px;background:#777"></s><s style="left:5px;top:16px;width:85px;height:1px;background:#e66"></s><s style="left:5px;top:24px;width:85px;height:1px;background:#777"></s><s style="left:5px;top:27px;width:85px;height:1px;background:#777"></s><s style="left:5px;top:34px;width:30px;height:24px;background:linear-gradient(#2a9ac8 0 3px,transparent 3px),repeating-linear-gradient(#ccc 0 1px,#fff 1px 3px)"></s><s style="left:38px;top:38px;width:78px;height:1px;background:#777"></s><s style="left:38px;top:48px;width:78px;height:1px;background:#777"></s><s style="left:5px;top:60px;width:110px;height:2px;background:#66d"></s></div>
<div class="th" style="top:907px"><i></i><s style="left:6px;top:15px;width:30px;height:1px;background:#555"></s><s style="left:6px;top:19px;width:56px;height:22px;background:linear-gradient(#2a9a5a 0 5px,transparent 5px),repeating-linear-gradient(#111 0 1px,#fff 1px 4px);border:1px solid #111"></s><s style="left:8px;top:46px;width:75px;height:1px;background:#777"></s><s style="left:8px;top:49px;width:65px;height:1px;background:#777"></s></div>
<div class="th" style="top:990px;height:61px;border-bottom:0"><i style="height:6px"></i><s style="left:4px;top:13px;width:110px;height:1px;background:#777"></s><s style="left:4px;top:21px;width:20px;height:2px;background:#d22"></s><s style="left:4px;top:26px;width:110px;height:1px;background:#777"></s><s style="left:4px;top:33px;width:55px;height:1px;background:#66d"></s><s style="left:4px;top:38px;width:40px;height:25px;background:linear-gradient(#2a9ac8 0 3px,transparent 3px),repeating-linear-gradient(#ccc 0 1px,#fff 1px 3px)"></s></div>

<!-- big slide -->
<div style="left:1261px;top:353px;width:787px;height:546px;background:#fff;box-shadow:0 3px 5px rgba(20,40,80,.55),-2px 0 4px rgba(20,40,80,.3)"></div>
<div style="left:1261px;top:353px;width:787px;height:51px;background:#359966"></div>
<div class="t" style="left:1312px;top:366px;height:30px;line-height:30px;font-family:'Noto Serif CJK SC','Liberation Serif',serif;font-size:25.500px;letter-spacing:1.500px;color:#fff">≥<span style="position:static;display:inline-block;width:66px;transform:scaleX(.66);transform-origin:0 50%">2.5mm</span>异形金属化槽和金属化孔内层孤立焊盘优化</div>
<div class="s" style="left:1293px;top:428px;font-size:15.900px">变更原因：&nbsp;异形金属化槽内层未增加焊盘导致孔壁分离。</div>
<div class="s" style="left:1293px;top:620px;font-size:24.500px;color:#f01010">变更后：</div>
<div class="s" style="left:1293px;top:653px;font-size:16px">1.&nbsp; 除射频微波板外的其他类型订单</div>
<div class="s" style="left:1293px;top:683px;font-size:16px">2.&nbsp; 有≥2.5mm的金属化槽或金属化孔</div>
<div class="s" style="left:1293px;top:744px;font-size:18.850px;color:#f01010">满足以上二个条件的订单，当内层无孤立焊盘时，内层隔层增加孤立焊盘。</div>
<div style="left:1270px;top:772px;width:700px;height:92px;box-sizing:border-box;background:#fff;border:3px solid #f4f41c;box-shadow:2px 3px 4px rgba(60,60,60,.6)"></div>
<div class="s" style="left:1295px;top:811px;font-size:18.750px;color:#000">≥2.5mm的金属化槽或金属化孔当内层有孤立焊盘时，则隔层删除孤立焊盘。</div>

<!-- photo -->
<svg style="position:absolute;left:1723px;top:459px" width="325" height="223" viewBox="0 0 325 223">
<defs><linearGradient id="pg" x1="0" y1="0" x2="0" y2="1"><stop offset="0" stop-color="#0a7a42"/><stop offset=".5" stop-color="#0c9655"/><stop offset="1" stop-color="#0b8a50"/></linearGradient>
<pattern id="spk" width="26" height="22" patternUnits="userSpaceOnUse"><circle cx="4" cy="5" r="2.500" fill="#9a9888"/><circle cx="15" cy="3" r="2" fill="#26261f"/><circle cx="20" cy="12" r="3" fill="#8c8a7a"/><circle cx="9" cy="15" r="2.500" fill="#2a2a24"/></pattern>
<filter id="sf" x="-5%" y="-5%" width="110%" height="110%"><feGaussianBlur stdDeviation="2.500"/></filter></defs>
<rect width="325" height="223" fill="url(#pg)"/>
<g transform="translate(-23,-19) scale(.33333)" filter="url(#sf)">
<path id="oo" d="M400 130C400 80 470 60 530 70C560 80 580 105 600 100C640 70 700 50 760 62C800 70 815 110 815 140C880 170 950 260 950 350C950 450 890 560 780 590C740 600 700 605 670 620C640 660 590 675 550 675C500 670 470 640 465 565C420 565 370 570 330 540C290 510 280 450 300 430C320 410 340 395 345 385C300 360 260 320 260 275C262 240 300 220 340 210C365 205 395 210 400 190Z" fill="#35353d" stroke="#a8a860" stroke-width="6"/>
<path d="M815 140C880 170 935 260 935 350C935 450 880 550 775 580L660 600 640 540 840 400 820 250Z" fill="#4a4a52"/>
<path d="M935 350C935 450 880 550 775 578 735 590 700 597 670 610" fill="none" stroke="#c8c8d0" stroke-width="9"/>
<path d="M500 610C530 650 590 660 640 625C665 590 650 560 640 530L540 520Z" fill="#07070c"/>
<path d="M430 160C420 120 470 90 510 105C540 120 580 170 605 195C630 160 650 100 700 85C740 75 770 100 765 130C760 170 730 200 715 225C730 240 745 260 735 280C700 310 620 330 560 345C530 350 505 370 500 395C510 430 560 470 600 510C630 540 650 560 635 580C610 610 570 600 550 570C540 530 540 490 530 450C490 470 440 510 400 525C360 530 325 500 335 470C350 440 400 410 430 390C400 370 340 355 310 335C280 310 280 270 300 255C340 240 410 240 470 250C450 220 430 190 430 160Z" fill="#54524a" stroke="#b8b6ae" stroke-width="6"/>
<path d="M430 160C420 120 470 90 510 105C540 120 580 170 605 195C630 160 650 100 700 85C740 75 770 100 765 130C760 170 730 200 715 225C730 240 745 260 735 280C700 310 620 330 560 345C530 350 505 370 500 395C510 430 560 470 600 510C630 540 650 560 635 580C610 610 570 600 550 570C540 530 540 490 530 450C490 470 440 510 400 525C360 530 325 500 335 470C350 440 400 410 430 390C400 370 340 355 310 335C280 310 280 270 300 255C340 240 410 240 470 250C450 220 430 190 430 160Z" fill="url(#spk)" opacity=".6"/>
<path d="M500 385C560 350 700 330 820 300C850 380 830 440 790 470C750 510 690 520 640 530C620 490 580 450 560 430C530 415 510 400 500 385Z" fill="#05050a"/>
<path d="M585 420C600 395 620 385 650 385C700 395 760 380 805 335C815 360 790 385 760 405C720 430 690 445 640 440C620 450 610 470 605 470C590 450 580 435 585 420Z" fill="#c4a890"/>
<path d="M825 490 885 470 900 425 860 455ZM880 352 920 368 915 352Z" fill="#f0f0f4"/>
<path d="M70 615 410 682 445 722" fill="none" stroke="#8fd0b8" stroke-width="6"/>
<path d="M70 718 440 725M150 690 210 700M285 712 340 722" fill="none" stroke="#8fd0b8" stroke-width="5"/>
<circle cx="112" cy="680" r="38" fill="#3a3a44" stroke="#8aa098" stroke-width="7"/><circle cx="245" cy="705" r="38" fill="#3a3a44" stroke="#8aa098" stroke-width="7"/><circle cx="378" cy="735" r="38" fill="#3a3a44" stroke="#8aa098" stroke-width="7"/>
</g></svg>
<!-- notes area line -->
<div style="left:1243px;top:1045px;width:805px;height:6px;background:#dbe7f6"></div>
<div style="left:1245px;top:1047px;width:803px;height:4px;background:#fff"></div>
</body></html>
